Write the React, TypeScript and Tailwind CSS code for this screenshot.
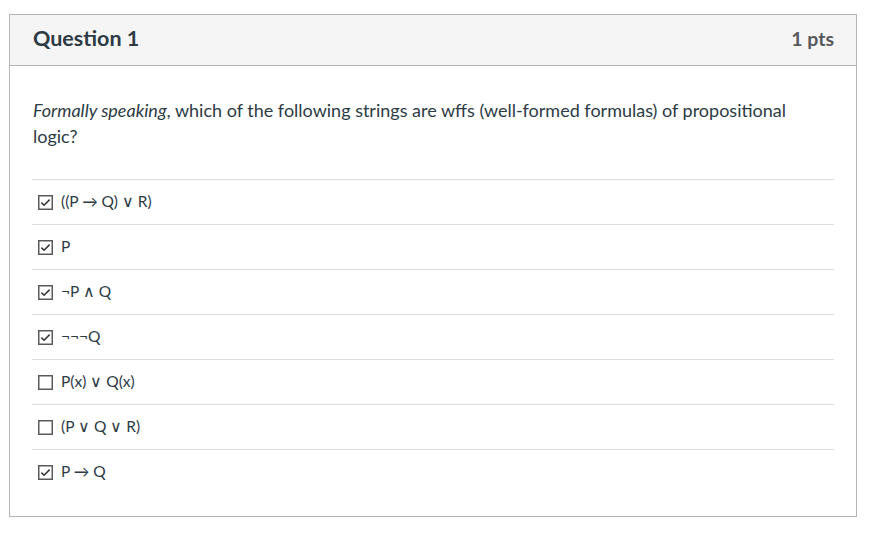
import React from "react";

const options: { label: string; checked: boolean }[] = [
  { label: "((P → Q) ∨ R)", checked: true },
  { label: "P", checked: true },
  { label: "¬P ∧ Q", checked: true },
  { label: "¬¬¬Q", checked: true },
  { label: "P(x) ∨ Q(x)", checked: false },
  { label: "(P ∨ Q ∨ R)", checked: false },
  { label: "P → Q", checked: true },
];

function Box({ checked }: { checked: boolean }) {
  return (
    <svg width="15" height="15" viewBox="0 0 15 15" className="shrink-0">
      <rect x="0.75" y="0.75" width="13.5" height="13.5" fill="#fff" stroke="#5a5a5a" strokeWidth="1.5" />
      {checked && (
        <path d="M3.4 7.6 L6.1 10.2 L11.6 4.6" fill="none" stroke="#333" strokeWidth="1.5" />
      )}
    </svg>
  );
}

export default function App() {
  return (
    <div className="w-[873px] h-[535px] bg-white pt-[14px] pl-[9px]" style={{ fontFamily: "Lato, 'Open Sans', sans-serif" }}>
      <div className="w-[848px] h-[503px] border border-[#b4b4b4] flex flex-col text-[#2d3b45]">
        <div className="h-[51px] shrink-0 bg-[#f5f5f5] border-b border-[#b4b4b4] flex items-center justify-between pl-[23px] pr-[22px] pb-[3px]">
          <div className="text-[21.5px] font-bold text-[#2d3b45]">Question 1</div>
          <div className="text-[19.5px] font-bold text-[#58595b]">1 pts</div>
        </div>
        <div className="px-[22px] pt-[31px]">
          <p className="text-[18px] leading-[26px] pl-[1px] pr-[40px]">
            <em>Formally speaking</em>, which of the following strings are wffs (well-formed formulas) of propositional logic?
          </p>
          <div className="mt-[30px]">
            {options.map((o) => (
              <div key={o.label} className="h-[45px] border-t border-[#dcdcdc] flex items-center pl-[6px] gap-[8px] text-[15.5px]">
                <Box checked={o.checked} />
                <span>{o.label}</span>
              </div>
            ))}
          </div>
        </div>
      </div>
    </div>
  );
}
